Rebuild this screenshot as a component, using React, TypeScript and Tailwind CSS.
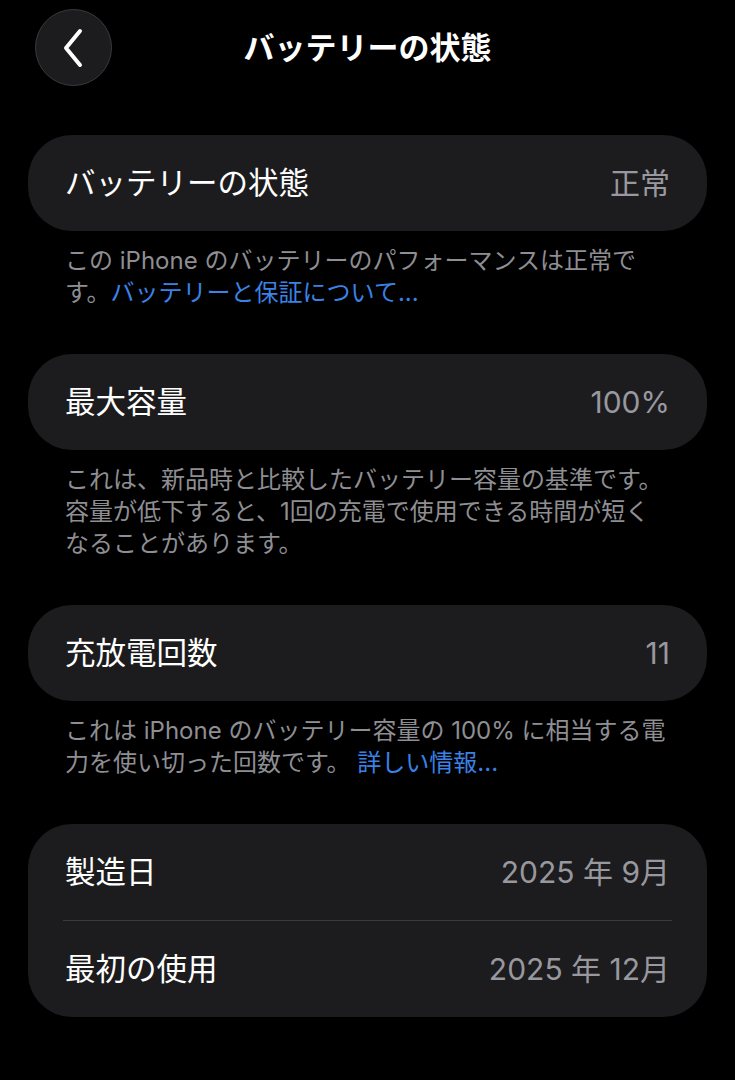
import React from "react";

const font = { fontFamily: '"Inter", "Noto Sans CJK JP", "Noto Sans", sans-serif' };

function Row({ label, value }: { label: string; value: string }) {
  return (
    <div className="flex h-[96px] items-center justify-between px-[37px]">
      <span className="text-[30.5px] text-white">{label}</span>
      <span className="text-[30px] text-[#98989e]">{value}</span>
    </div>
  );
}

function Card({ children }: { children: React.ReactNode }) {
  return <div className="mx-[28px] rounded-[44px] bg-[#1c1c1e]">{children}</div>;
}

function Footer({ children }: { children: React.ReactNode }) {
  return (
    <div className="mx-[65px] mt-[14px] mb-[45px] text-[24px] leading-[32px] text-[#8e8e93]">
      {children}
    </div>
  );
}

export default function App() {
  return (
    <div className="min-h-[1080px] w-[735px] bg-black" style={font}>
      <div className="relative flex h-[135px] items-start">
        <div className="ml-[35px] mt-[9px] flex h-[77px] w-[77px] items-center justify-center rounded-full border border-[#3a3a3c] bg-[#1c1c1e]">
          <svg width="30" height="42" viewBox="0 0 30 42" fill="none">
            <path d="M21 4 L7 21 L21 38" stroke="white" strokeWidth="4" strokeLinecap="round" strokeLinejoin="round" />
          </svg>
        </div>
        <div className="absolute left-0 right-0 top-[25px] text-center text-[31px] font-bold text-white">
          バッテリーの状態
        </div>
      </div>

      <Card>
        <Row label="バッテリーの状態" value="正常" />
      </Card>
      <Footer>
        この iPhone のバッテリーのパフォーマンスは正常で
        <br />
        す。<span className="text-[#3a82e6]">バッテリーと保証について...</span>
      </Footer>

      <Card>
        <Row label="最大容量" value="100%" />
      </Card>
      <Footer>
        これは、新品時と比較したバッテリー容量の基準です。
        <br />
        容量が低下すると、1回の充電で使用できる時間が短く
        <br />
        なることがあります。
      </Footer>

      <Card>
        <Row label="充放電回数" value="11" />
      </Card>
      <Footer>
        これは iPhone のバッテリー容量の 100% に相当する電
        <br />
        力を使い切った回数です。 <span className="text-[#3a82e6]">詳しい情報...</span>
      </Footer>

      <Card>
        <Row label="製造日" value="2025 年 9月" />
        <div className="mx-[35px] h-px bg-[#3a3a3c]" />
        <Row label="最初の使用" value="2025 年 12月" />
      </Card>
    </div>
  );
}
